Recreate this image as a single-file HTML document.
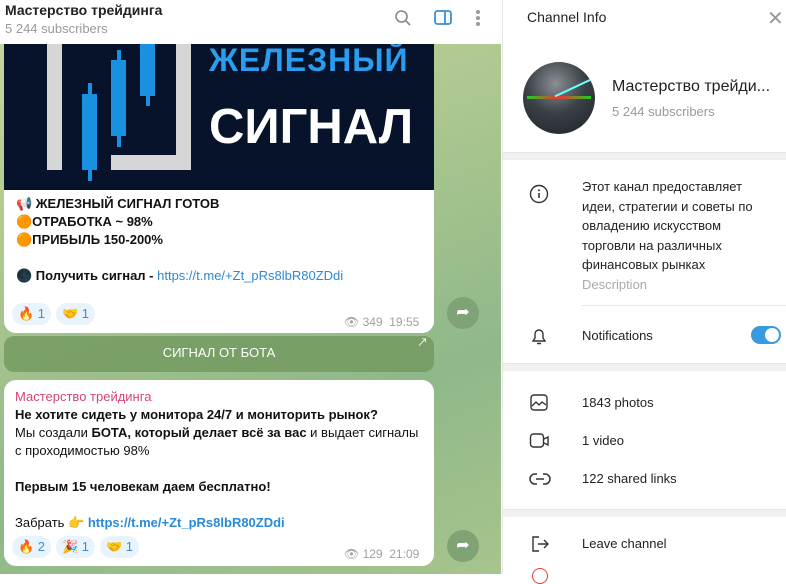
<!DOCTYPE html>
<html><head><meta charset="utf-8"><style>
*{box-sizing:border-box;margin:0;padding:0}
body{width:786px;height:574px;overflow:hidden;font-family:"Liberation Sans","Noto Sans CJK SC",sans-serif;position:relative;background:#fff}
.chat{position:absolute;left:0;top:0;width:501px;height:574px;background:linear-gradient(160deg,#c9d79c 0%,#a9c58e 40%,#8fb88a 70%,#a7c48c 100%);overflow:hidden}
.hdr{position:absolute;left:0;top:0;width:501px;height:44px;background:#fff;z-index:3}
.hdr .t{position:absolute;left:5px;top:2px;font-size:14px;font-weight:bold;color:#222}
.hdr .s{position:absolute;left:5px;top:21px;font-size:13px;color:#999}
.img{position:absolute;left:4px;top:44px;width:430px;height:146px;background:#06132a;overflow:hidden}
.b1{position:absolute;left:4px;top:190px;width:430px;height:143px;background:#fff;border-radius:0 0 12px 12px}
.txt{font-size:13px;color:#111;line-height:18px}
.react{position:absolute;height:22px;border-radius:11px;background:#e8f3fc;font-size:13px;color:#3a8fd0;padding:3px 6px;line-height:16px}
.meta{position:absolute;font-size:12px;color:#a0a0a0}
.fwd{position:absolute;width:32px;height:32px;border-radius:50%;background:#7fa374;color:#fff;font-size:16px;text-align:center;line-height:32px}
.btn{position:absolute;left:4px;top:336px;width:430px;height:36px;background:rgba(110,150,90,.75);border-radius:10px;color:#fff;font-size:13px;text-align:center;line-height:34px}
.b2{position:absolute;left:4px;top:380px;width:430px;height:186px;background:#fff;border-radius:12px}
.panel{position:absolute;left:502px;top:0;width:284px;height:574px;background:#fff;border-left:1px solid #e5e5e5}
.gap{position:absolute;left:0;width:284px;height:8px;background:#f1f1f1;border-top:1px solid #e6e6e6}
.row{position:absolute;left:79px;font-size:13px;color:#222}
.ico{position:absolute;left:26px}
</style></head><body>
<div class="chat">
<div class="hdr"><div class="t">Мастерство трейдинга</div><div class="s">5 244 subscribers</div>
<svg style="position:absolute;left:394px;top:9px" width="18" height="18" viewBox="0 0 18 18"><circle cx="7.5" cy="7.5" r="5.5" fill="none" stroke="#888" stroke-width="1.6"/><path d="M11.5 11.5L16 16" stroke="#888" stroke-width="1.6"/></svg>
<svg style="position:absolute;left:434px;top:10px" width="18" height="16" viewBox="0 0 18 16"><rect x="1" y="1" width="16" height="13" rx="2.5" fill="none" stroke="#3a8fd0" stroke-width="1.8"/><path d="M11 1v13" stroke="#3a8fd0" stroke-width="1.8"/></svg>
<svg style="position:absolute;left:475px;top:9px" width="6" height="18"><circle cx="3" cy="3" r="2" fill="#999"/><circle cx="3" cy="9" r="2" fill="#999"/><circle cx="3" cy="15" r="2" fill="#999"/></svg>
</div>
<div class="img">
<div style="position:absolute;left:43px;top:0;width:15px;height:126px;background:#d6d6d6"></div>
<div style="position:absolute;left:107px;top:111px;width:80px;height:15px;background:#d6d6d6"></div>
<div style="position:absolute;left:172px;top:0;width:15px;height:126px;background:#d6d6d6"></div>
<div style="position:absolute;left:84px;top:39px;width:4px;height:98px;background:#1a90e0"></div>
<div style="position:absolute;left:78px;top:50px;width:15px;height:76px;background:#1a90e0"></div>
<div style="position:absolute;left:113px;top:6px;width:4px;height:97px;background:#1a90e0"></div>
<div style="position:absolute;left:107px;top:16px;width:15px;height:76px;background:#1a90e0"></div>
<div style="position:absolute;left:142px;top:0;width:4px;height:62px;background:#1a90e0"></div>
<div style="position:absolute;left:136px;top:0;width:15px;height:52px;background:#1a90e0"></div>
<div style="position:absolute;left:205px;top:-2px;font-size:32px;font-weight:bold;color:#2a9df0;letter-spacing:1px">ЖЕЛЕЗНЫЙ</div>
<div style="position:absolute;left:205px;top:55px;font-size:49px;font-weight:bold;color:#fff">СИГНАЛ</div>
</div>
<div class="b1">
<div class="txt" style="position:absolute;left:12px;top:5px;font-weight:bold">📢 ЖЕЛЕЗНЫЙ СИГНАЛ ГОТОВ<br>🟠ОТРАБОТКА ~ 98%<br>🟠ПРИБЫЛЬ 150-200%<br><br>🌑 Получить сигнал - <span style="color:#2b8ad6;font-weight:normal">https://t.me/+Zt_pRs8lbR80ZDdi</span></div>
<div class="react" style="left:8px;top:113px">🔥 1</div>
<div class="react" style="left:52px;top:113px">🤝 1</div>
<div class="meta" style="left:340px;top:125px">👁 349&nbsp;&nbsp;19:55</div>
</div>
<div class="fwd" style="left:447px;top:297px">➦</div>
<div class="btn">СИГНАЛ ОТ БОТА<span style="position:absolute;right:6px;top:-10px;font-size:11px">↗</span></div>
<div class="b2">
<div class="txt" style="position:absolute;left:11px;top:8px"><span style="color:#d5457a">Мастерство трейдинга</span><br><b>Не хотите сидеть у монитора 24/7 и мониторить рынок?</b><br>Мы создали <b>БОТА, который делает всё за вас</b> и  выдает сигналы<br>с проходимостью 98%<br><br><b>Первым 15 человекам даем бесплатно!</b><br><br>Забрать 👉 <b style="color:#2b8ad6">https://t.me/+Zt_pRs8lbR80ZDdi</b></div>
<div class="react" style="left:8px;top:156px">🔥 2</div>
<div class="react" style="left:52px;top:156px">🎉 1</div>
<div class="react" style="left:96px;top:156px">🤝 1</div>
<div class="meta" style="left:340px;top:167px">👁 129&nbsp;&nbsp;21:09</div>
</div>
<div class="fwd" style="left:447px;top:530px">➦</div>
</div>
<div class="panel">
<div style="position:absolute;left:24px;top:9px;font-size:14px;color:#222">Channel Info</div>
<div style="position:absolute;left:264px;top:6px;font-size:20px;color:#999">✕</div>
<div style="position:absolute;left:20px;top:62px;width:72px;height:72px;border-radius:50%;background:radial-gradient(circle at 45% 30%,#8a8f96 0%,#3c4148 45%,#1c2027 100%);overflow:hidden">
<div style="position:absolute;left:4px;top:34px;width:64px;height:3px;background:linear-gradient(90deg,#2c2 0%,#e33 50%,#2c2 100%)"></div>
<div style="position:absolute;left:30px;top:24px;width:44px;height:2px;background:#6ff;transform:rotate(-25deg)"></div></div>
<div style="position:absolute;left:109px;top:78px;font-size:16px;color:#222">Мастерство трейди...</div>
<div style="position:absolute;left:109px;top:104px;font-size:13px;color:#999">5 244 subscribers</div>
<div class="gap" style="top:152px"></div>
<svg class="ico" style="top:184px" width="20" height="20"><circle cx="10" cy="10" r="8.5" fill="none" stroke="#333" stroke-width="1.4"/><path d="M10 9v5" stroke="#333" stroke-width="1.6"/><circle cx="10" cy="6.3" r="1" fill="#333"/></svg>
<div class="row" style="top:177px;line-height:19.5px">Этот канал предоставляет<br>идеи, стратегии и советы по<br>овладению искусством<br>торговли на различных<br>финансовых рынках<br><span style="color:#aaa">Description</span></div>
<div style="position:absolute;left:79px;top:305px;width:205px;height:1px;background:#e6e6e6"></div>
<svg class="ico" style="top:326px" width="20" height="20"><path d="M4 15h12l-2-3V8a4 4 0 0 0-8 0v4z M8 17.5h4" fill="none" stroke="#333" stroke-width="1.4"/></svg>
<div class="row" style="top:328px">Notifications</div>
<div style="position:absolute;left:248px;top:326px;width:30px;height:18px;border-radius:9px;background:#3a9ae0"><div style="position:absolute;right:2px;top:2px;width:14px;height:14px;border-radius:50%;background:#fff"></div></div>
<div class="gap" style="top:363px"></div>
<svg class="ico" style="top:393px" width="20" height="20"><rect x="2" y="2" width="16" height="15" rx="3" fill="none" stroke="#333" stroke-width="1.4"/><path d="M3 13l4-4 3 3 3-3 4 3" fill="none" stroke="#333" stroke-width="1.3"/></svg>
<div class="row" style="top:395px">1843 photos</div>
<svg class="ico" style="top:431px" width="22" height="20"><rect x="1.5" y="3" width="13" height="13" rx="3" fill="none" stroke="#333" stroke-width="1.4"/><path d="M15 8l4-2v8l-4-2" fill="none" stroke="#333" stroke-width="1.4"/></svg>
<div class="row" style="top:433px">1 video</div>
<svg class="ico" style="top:469px" width="22" height="20"><path d="M8 5H6a5 5 0 0 0 0 10h2M14 5h2a5 5 0 0 1 0 10h-2M7 10h8" fill="none" stroke="#333" stroke-width="1.5"/></svg>
<div class="row" style="top:471px">122 shared links</div>
<div class="gap" style="top:509px"></div>
<svg class="ico" style="top:534px" width="22" height="20"><path d="M10 3H4v14h6M9 10h10M15 6l4 4-4 4" fill="none" stroke="#333" stroke-width="1.4"/></svg>
<div class="row" style="top:536px">Leave channel</div>
<div style="position:absolute;left:29px;top:568px;width:16px;height:16px;border-radius:50%;border:1.5px solid #e04040"></div>
</div>
</body></html>
